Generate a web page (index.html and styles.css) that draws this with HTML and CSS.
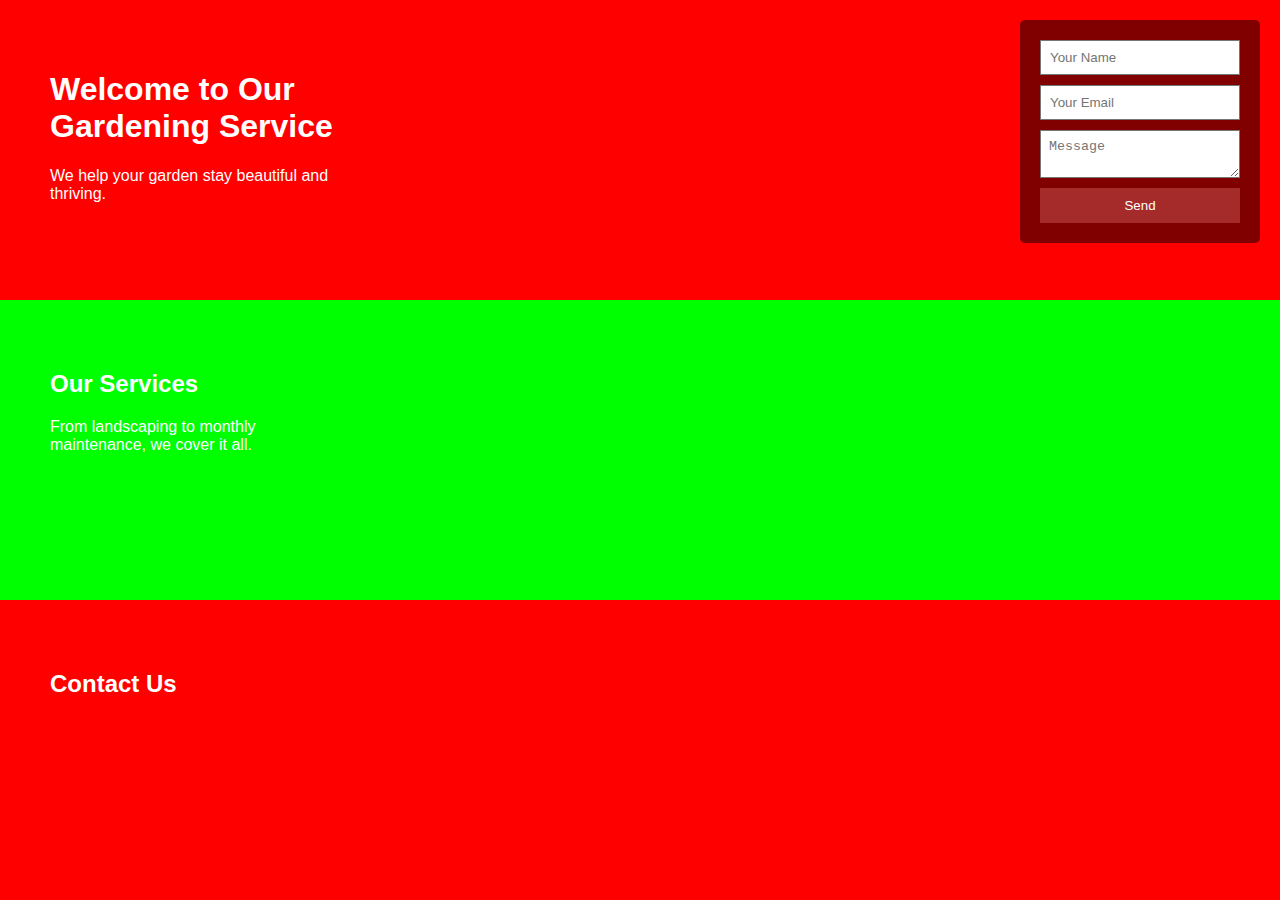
FILE: index.html
```html
<!DOCTYPE html>
<html lang="en">
<head>
<meta charset="utf-8">
<title>Gardening Service</title>
<link rel="stylesheet" href="styles.css">
</head>
<body>
  <section class="section section-red">
    <div class="content">
      <h1>Welcome to Our Gardening Service</h1>
      <p>We help your garden stay beautiful and thriving.</p>
    </div>
  </section>
  <section class="section section-green">
    <div class="content">
      <h2>Our Services</h2>
      <p>From landscaping to monthly maintenance, we cover it all.</p>
    </div>
  </section>
  <section class="section section-red">
    <div class="content">
      <h2>Contact Us</h2>
    </div>
  </section>

  <form class="contact-form">
    <input class="field" type="text" placeholder="Your Name">
    <input class="field" type="email" placeholder="Your Email">
    <textarea class="field field-area" placeholder="Message"></textarea>
    <button class="send" type="button">Send</button>
  </form>
</body>
</html>
```

FILE: styles.css
```css
html, body {
  margin: 0;
  padding: 0;
}

body {
  font-family: "Liberation Sans", Arial, sans-serif;
  color: #ffffff;
}

.section {
  height: 300px;
  box-sizing: border-box;
  padding: 50px;
}

.section-red {
  background: #ff0000;
}

.section-green {
  background: #00ff00;
}

.content {
  max-width: 300px;
}

.content h1 {
  font-size: 32px;
  margin: 21.44px 0;
}

.content h2 {
  font-size: 24px;
  margin: 19.92px 0;
}

.content p {
  font-size: 16px;
  margin: 16px 0;
}

.contact-form {
  position: fixed;
  top: 20px;
  right: 20px;
  width: 200px;
  padding: 20px;
  background: #800000;
  border-radius: 5px;
  display: flex;
  flex-direction: column;
  gap: 10px;
}

.field {
  box-sizing: border-box;
  width: 200px;
  height: 35px;
  margin: 0;
  padding: 8px 9px;
  border: 1px solid #767676;
  border-radius: 0;
  background: #ffffff;
  font-family: "Liberation Sans", Arial, sans-serif;
  font-size: 13.33px;
  color: #000;
}

.field::placeholder {
  color: #757575;
}

.field-area {
  height: 48px;
  padding: 8px 8px;
  font-family: "Liberation Mono", "Courier New", monospace;
  font-size: 13.33px;
  resize: both;
}

.send {
  width: 200px;
  height: 35px;
  margin: 0;
  border: none;
  background: #a52a2a;
  color: #ffffff;
  font-family: "Liberation Sans", Arial, sans-serif;
  font-size: 13.33px;
  cursor: pointer;
}
```
